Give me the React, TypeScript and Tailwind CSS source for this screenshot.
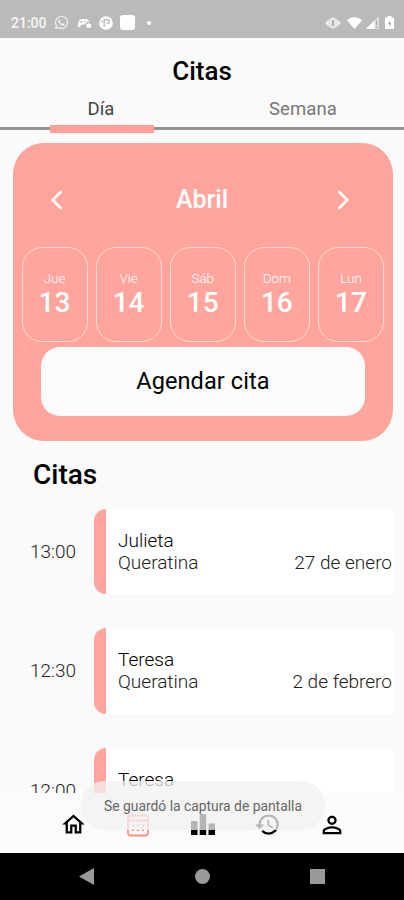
import React from "react";
import { FaWhatsapp } from "react-icons/fa";
import { MdHistory, MdOutlineHome, MdPersonOutline } from "react-icons/md";

const days = [
  { name: "Jue", number: 13 },
  { name: "Vie", number: 14 },
  { name: "Sáb", number: 15 },
  { name: "Dom", number: 16 },
  { name: "Lun", number: 17 },
];

const appointments = [
  { time: "13:00", client: "Julieta", service: "Queratina", date: "27 de enero" },
  { time: "12:30", client: "Teresa", service: "Queratina", date: "2 de febrero" },
  { time: "12:00", client: "Teresa", service: "Queratina", date: "2 de febrero" },
];

function StatusBar() {
  return (
    <div className="flex h-[38px] items-center bg-[#bababa] pt-[7px] text-white">
      <span className="ml-[11px] w-[36px] whitespace-nowrap text-[14px] font-medium leading-none text-[#f6f6f6]">21:00</span>
      <FaWhatsapp className="ml-[7px] size-[15px] text-[#f4f4f4]" />
      <svg className="ml-[8px] h-[12px] w-[15px]" viewBox="0 0 15 12" fill="currentColor">
        <path d="M1 9.5C.6 5 2.5 2 5 2h4c1.800 0 2.700 1.200 3 3H9.500v1.500H8L7 7.500H5L2.500 10C2 10.500 1.100 10.300 1 9.500z" />
        <circle cx="4.500" cy="5" r="1" fill="#bababa" />
        <circle cx="8" cy="4.500" r=".8" fill="#bababa" />
        <path d="M9.500 7h1.200l.5-.8h1.400l.5.8h1v3.700H9.500z" />
      </svg>
      <svg className="ml-[7px] size-[14px]" viewBox="0 0 14 14">
        <circle cx="7" cy="7" r="6.800" fill="currentColor" />
        <path d="M5.200 11V3.800h3.600a1.700 1.700 0 0 1 0 3.400H7.600M2 5.500h1.700" fill="none" stroke="#bababa" strokeWidth="1.400" />
      </svg>
      <span className="ml-[7px] size-[15px] rounded-[3px] bg-white" />
      <span className="ml-[12px] size-1 rounded-full bg-white" />
      <svg className="ml-auto h-[12px] w-[16px]" viewBox="0 0 16 12">
        <path d="M0 6l3-3v6zM16 6l-3-3v6z" fill="#eee" />
        <path d="M8 0l5 3v6l-5 3-5-3V3z" fill="#e6e6e6" />
        <path d="M8 3v6" stroke="#aaa" strokeWidth="1.800" />
      </svg>
      <svg className="ml-[6px] h-[12px] w-[15px]" viewBox="0 0 15 12" fill="currentColor">
        <path d="M0 3.200C4-.8 11-.8 15 3.200L7.500 12z" />
      </svg>
      <svg className="ml-[4px] size-[13px]" viewBox="0 0 13 13">
        <path d="M13 0v13H0z" fill="#ddd" />
        <path d="M8.500 4.500V13H0z" fill="white" />
        <path d="M10.500 5v4M10.500 10.500V12" stroke="#aaa" strokeWidth="1.300" />
      </svg>
      <svg className="ml-[6px] mr-[10px] h-[13px] w-[9px]" viewBox="0 0 9 13">
        <path d="M2.500 0h4v1.500H8q1 0 1 1V12q0 1-1 1H1q-1 0-1-1V2.500q0-1 1-1h1.500z" fill="white" />
        <path d="M5.200 4L3 8h1.400v3L6.300 7H5z" fill="#aaa" />
      </svg>
    </div>
  );
}

function Chevron({ flip = false }: { flip?: boolean }) {
  return (
    <svg
      className={flip ? "h-[20px] w-[13px] rotate-180" : "h-[20px] w-[13px]"}
      viewBox="0 0 13 20"
      fill="none"
      stroke="white"
      strokeWidth="2.600"
    >
      <path d="M11.500 1.200L2.700 10l8.800 8.800" />
    </svg>
  );
}

function MonthCard() {
  return (
    <section className="ml-[13px] mt-[10px] flex h-[298px] w-[380px] flex-col rounded-[31px] bg-[#ffa59d] text-white">
      <div className="flex h-[104px] items-center justify-between pl-[37px] pr-[43px] pt-[9px]">
        <Chevron />
        <h2 className="pl-[4px] text-[25px] font-medium leading-none">Abril</h2>
        <Chevron flip />
      </div>
      <div className="flex justify-between pl-[8.500px] pr-[9px]">
        {days.map((day) => (
          <div
            key={day.number}
            className="flex h-[95px] w-[66px] flex-col items-center rounded-[20px] border border-[#ffdcd6] pt-[21px]"
          >
            <span className="text-[13.500px] font-light leading-[18px]">{day.name}</span>
            <span className="text-[28px] font-medium leading-[32px]">{day.number}</span>
          </div>
        ))}
      </div>
      <button className="ml-[28px] mt-[5px] h-[69px] w-[324px] rounded-[19px] bg-[#fbfbfb] pt-px text-[23.500px] tracking-[0.100px] text-black">
        Agendar cita
      </button>
    </section>
  );
}

function CalendarIcon() {
  return (
    <svg className="h-[24px] w-[22px]" viewBox="0 0 22 24" fill="none" stroke="#ff8f86" strokeWidth="1.800">
      <rect x="1" y="2.500" width="20" height="20" rx="2.500" />
      <path d="M1 7.500h20M5.500.5v3M16.500.5v3" strokeWidth="2.200" />
      <path d="M5 12.500h2.200M9.900 12.500h2.200M14.800 12.500H17M5 17h2.200M9.900 17h2.200M14.800 17H17" strokeWidth="2.200" />
    </svg>
  );
}

function BottomNav() {
  return (
    <nav className="relative flex h-[60px] items-center bg-[#fbfbfb] pl-[41px] pt-[3px] text-black">
      <div className="flex w-[65px] justify-center">
        <MdOutlineHome className="size-[27px]" />
      </div>
      <div className="flex w-[64px] justify-center">
        <CalendarIcon />
      </div>
      <div className="flex w-[65px] justify-center">
        <svg className="h-[22px] w-[24px]" viewBox="0 0 24 22" fill="currentColor">
          <path d="M0 7h6.500v14H0zM8.700 0h6.500v21H8.700zM17.500 9.500H24V21h-6.500z" />
        </svg>
      </div>
      <div className="flex w-[65px] justify-center">
        <MdHistory className="size-[27px]" />
      </div>
      <div className="flex w-[64px] justify-center">
        <MdPersonOutline className="size-[28px]" />
      </div>
      <div className="absolute left-[81px] top-[-12px] flex h-[49px] w-[244px] items-center justify-center whitespace-nowrap rounded-[24px] bg-[#f2f2f2]/75 pt-[2px] text-[13.850px] text-[#666]">
        Se guardó la captura de pantalla
      </div>
    </nav>
  );
}

export default function App() {
  return (
    <main className="flex h-[900px] w-[404px] flex-col overflow-hidden bg-[#fafafa] font-[Roboto,sans-serif]">
      <StatusBar />
      <h1 className="pt-[17px] text-center text-[26px] font-medium leading-[32px] text-black">Citas</h1>
      <div className="flex h-[46px] flex-col">
        <div className="grid h-[38px] grid-cols-2 pt-[11px] text-center text-[18.500px] leading-[23px] tracking-[0.100px]">
          <span className="text-[#444]">Día</span>
          <span className="text-[#777]">Semana</span>
        </div>
        <div className="flex h-[8px] items-center bg-[linear-gradient(#929692,#929692)] bg-[length:100%_3px] bg-[position:0_2px] bg-no-repeat">
          <span className="ml-[50px] h-[8px] w-[104px] bg-[#ff9f97]" />
        </div>
      </div>
      <MonthCard />
      <h2 className="mt-[17px] pl-[33px] text-[28px] font-medium leading-[34px] text-black">Citas</h2>
      <div className="flex min-h-0 flex-1 flex-col gap-[34px] overflow-hidden pt-[16.500px]">
        {appointments.map((item) => (
          <article key={item.time} className="flex h-[85.500px] shrink-0 items-stretch text-[19px] font-light leading-[22px] text-[#222]">
            <span className="w-[94px] self-center pl-[30px] pt-px">{item.time}</span>
            <span className="w-[12px] rounded-l-[12px] bg-[#ffa59d]" />
            <div className="flex w-[287px] flex-col justify-center bg-white pl-[12px] pr-[1px] pt-px">
              <span className="text-black">{item.client}</span>
              <div className="flex justify-between">
                <span>{item.service}</span>
                <span>{item.date}</span>
              </div>
            </div>
          </article>
        ))}
      </div>
      <BottomNav />
      <footer className="flex h-[47px] items-center bg-black pl-[79px]">
        <svg className="h-[17px] w-[15px]" viewBox="0 0 15 17">
          <path d="M15 0v17L0 8.500z" fill="#999" />
        </svg>
        <span className="ml-[101px] size-[15px] rounded-full bg-[#999]" />
        <span className="ml-[100px] size-[15px] bg-[#999]" />
      </footer>
    </main>
  );
}
